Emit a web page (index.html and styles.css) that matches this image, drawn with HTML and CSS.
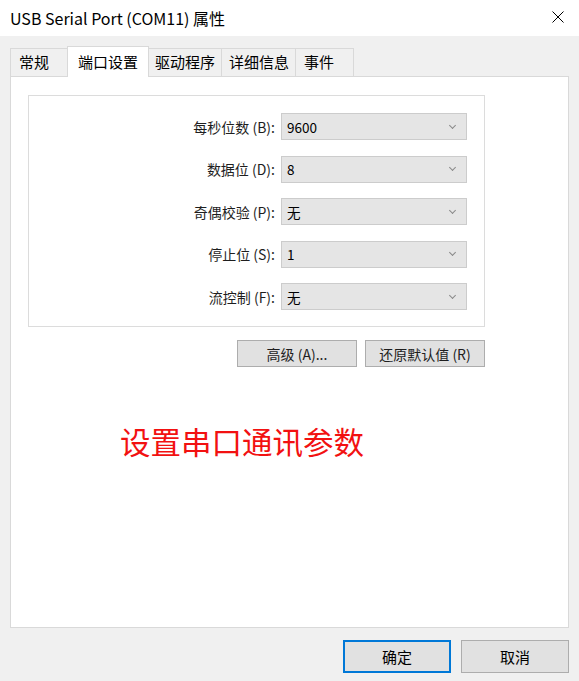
FILE: index.html
```html
<!DOCTYPE html>
<html lang="zh-CN">
<head>
    <meta charset="UTF-8">
    <meta name="viewport" content="width=device-width, initial-scale=1.0">
    <title>USB Serial Port (COM11) 属性</title>
    <link rel="stylesheet" href="styles.css">
</head>
<body>
    <div class="window">
        <!-- 标题栏 -->
        <div class="titlebar">
            <span class="title">USB Serial Port (COM11) 属性</span>
            <span class="close">
                <svg width="12" height="12" viewBox="0 0 12 12">
                    <path d="M0.5 0.5 L11.5 11.5 M11.5 0.5 L0.5 11.5" stroke="#000" stroke-width="1" fill="none"/>
                </svg>
            </span>
        </div>

        <div class="body">
            <!-- 选项卡 -->
            <div class="tabs">
                <div class="tab tab-short">常规</div>
                <div class="tab active">端口设置</div>
                <div class="tab">驱动程序</div>
                <div class="tab">详细信息</div>
                <div class="tab tab-short">事件</div>
            </div>

            <div class="panel">
                <div class="group">
                    <div class="row">
                        <label>每秒位数 (B):</label>
                        <div class="combo"><span>9600</span><i class="chev"></i></div>
                    </div>
                    <div class="row">
                        <label>数据位 (D):</label>
                        <div class="combo"><span>8</span><i class="chev"></i></div>
                    </div>
                    <div class="row">
                        <label>奇偶校验 (P):</label>
                        <div class="combo"><span>无</span><i class="chev"></i></div>
                    </div>
                    <div class="row">
                        <label>停止位 (S):</label>
                        <div class="combo"><span>1</span><i class="chev"></i></div>
                    </div>
                    <div class="row">
                        <label>流控制 (F):</label>
                        <div class="combo"><span>无</span><i class="chev"></i></div>
                    </div>
                </div>

                <div class="actions">
                    <button class="btn">高级 (A)...</button>
                    <button class="btn">还原默认值 (R)</button>
                </div>

                <div class="note">设置串口通讯参数</div>
            </div>

            <!-- 底部按钮 -->
            <div class="footer">
                <button class="btn big default">确定</button>
                <button class="btn big">取消</button>
            </div>
        </div>
    </div>
</body>
</html>
```

FILE: styles.css
```css
body {
    margin: 0;
    padding: 0;
    width: 579px;
    height: 681px;
    overflow: hidden;
    background: #f0f0f0;
    font-family: "Noto Sans CJK SC", "Noto Sans", sans-serif;
    color: #000;
}

.window {
    display: flex;
    flex-direction: column;
    height: 100%;
}

/* 标题栏 */
.titlebar {
    height: 36px;
    background: #fff;
    display: flex;
    align-items: center;
    justify-content: space-between;
    padding: 0 15px 0 10px;
    flex-shrink: 0;
}

.title {
    font-size: 16px;
}

.close {
    display: flex;
    margin-top: -2px;
}

.body {
    padding: 10px 10px 0 10px;
    display: flex;
    flex-direction: column;
}

/* 选项卡 */
.tabs {
    display: flex;
    align-items: flex-end;
    height: 30px;
    position: relative;
    z-index: 2;
    padding-left: 1px;
}

.tab {
    height: 28px;
    line-height: 26px;
    padding: 0 6px 0 7px;
    font-size: 15px;
    border: 1px solid #d9d9d9;
    border-bottom: none;
    margin-left: -1px;
    background: #f0f0f0;
    box-sizing: border-box;
}

.tab-short {
    width: 59px;
    padding-left: 8px;
}

.tab.active {
    background: #fff;
    height: 31px;
    line-height: 30px;
    padding: 0 10px;
    margin: 0 -1px -1px -2px;
    position: relative;
    z-index: 3;
}

.panel {
    background: #fff;
    border: 1px solid #d9d9d9;
    height: 552px;
    box-sizing: border-box;
    padding: 18px 0 0 17px;
}

/* 分组框 */
.group {
    width: 457px;
    box-sizing: border-box;
    border: 1px solid #dcdcdc;
    padding: 17px 17px 16px 0;
    display: flex;
    flex-direction: column;
    gap: 15.5px;
}

.row {
    display: flex;
    justify-content: flex-end;
    align-items: center;
    gap: 6px;
}

.row label {
    font-size: 14px;
    color: #1e1e1e;
}

.combo {
    width: 186px;
    height: 27px;
    box-sizing: border-box;
    background: #e5e5e5;
    border: 1px solid #cccccc;
    display: flex;
    align-items: center;
    justify-content: space-between;
    padding: 0 11px 0 5px;
    font-size: 13.5px;
}

.chev {
    width: 4px;
    height: 4px;
    border-right: 1px solid #8a8a8a;
    border-bottom: 1px solid #8a8a8a;
    transform: rotate(45deg);
    margin-top: -3px;
}

.actions {
    display: flex;
    gap: 8px;
    width: 457px;
    justify-content: flex-end;
    margin-top: 13px;
}

.btn {
    font-family: inherit;
    font-size: 14px;
    height: 27px;
    width: 120px;
    background: #e1e1e1;
    border: 1px solid #adadad;
    color: #1e1e1e;
    padding: 0;
}

.note {
    margin: 54px 0 0 92px;
    font-size: 30.5px;
    line-height: 40px;
    color: #f21111;
}

/* 底部按钮 */
.footer {
    display: flex;
    justify-content: flex-end;
    gap: 10px;
    margin-top: 12px;
}

.btn.big {
    width: 108px;
    height: 33px;
    font-size: 15px;
    color: #000;
}

.btn.default {
    border: 2px solid #0078d7;
}
```
